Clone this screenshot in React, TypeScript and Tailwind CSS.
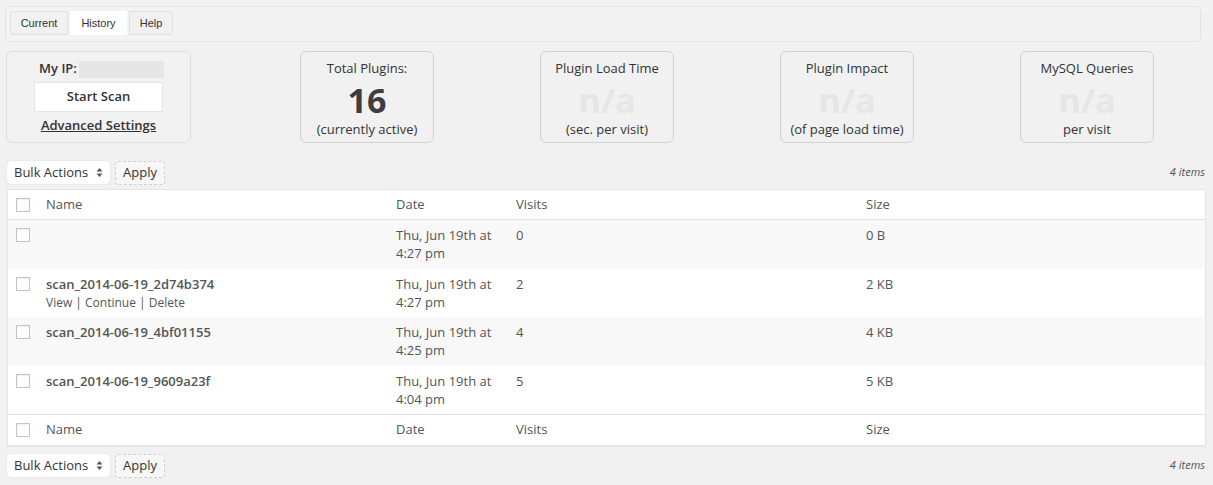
import React from 'react';

const rows = [
  { name: '', actions: false, date: 'Thu, Jun 19th at 4:27 pm', visits: '0', size: '0 B' },
  { name: 'scan_2014-06-19_2d74b374', actions: true, date: 'Thu, Jun 19th at 4:27 pm', visits: '2', size: '2 KB' },
  { name: 'scan_2014-06-19_4bf01155', actions: false, date: 'Thu, Jun 19th at 4:25 pm', visits: '4', size: '4 KB' },
  { name: 'scan_2014-06-19_9609a23f', actions: false, date: 'Thu, Jun 19th at 4:04 pm', visits: '5', size: '5 KB' },
];

const stats = [
  { title: 'Total Plugins:', value: '16', sub: '(currently active)', muted: false },
  { title: 'Plugin Load Time', value: 'n/a', sub: '(sec. per visit)', muted: true },
  { title: 'Plugin Impact', value: 'n/a', sub: '(of page load time)', muted: true },
  { title: 'MySQL Queries', value: 'n/a', sub: 'per visit', muted: true },
];

function Checkbox() {
  return <div className="w-[14px] h-[14px] border border-[#c4c4c4] bg-white shadow-[inset_0_1px_2px_rgba(0,0,0,0.07)]" />;
}

function BulkBar() {
  return (
    <div className="flex items-center h-[25px]">
      <div className="ml-[7px] w-[103px] h-[23px] bg-white rounded-[4px] shadow-[0_0_1px_rgba(0,0,0,0.25)] flex items-center pl-[7px] text-[13px] text-[#333]">
        Bulk Actions
        <svg width="7" height="11" viewBox="0 0 7 11" className="ml-[8px]">
          <path d="M0.5 4.5 L3.5 1 L6.5 4.5 Z" fill="#555" />
          <path d="M0.5 6.5 L3.5 10 L6.5 6.5 Z" fill="#555" />
        </svg>
      </div>
      <div className="ml-[5px] w-[50px] h-[24px] bg-[#f7f7f7] border border-dashed border-[#cfcfcf] rounded-[3px] flex items-center justify-center text-[13px] text-[#333]">
        Apply
      </div>
      <div className="ml-auto mr-[8px] text-[11px] italic text-[#555]">4 items</div>
    </div>
  );
}

export default function App() {
  return (
    <div className="w-[1213px] h-[485px] bg-[#f1f1f1] pt-[6px] text-[#444] overflow-hidden" style={{ fontFamily: '"Open Sans", sans-serif' }}>
      {/* tabs */}
      <div className="ml-[5px] w-[1196px] h-[36px] border border-[#e2e2e2] rounded-[5px] bg-[#f3f3f3] pt-[4px] pl-[4px]">
        <div className="flex gap-[2px] text-[11px] text-[#333]" style={{ fontFamily: '"Liberation Sans", Arial, sans-serif' }}>
          <div className="h-[24px] w-[58px] flex items-center justify-center bg-[#f1f1f1] border border-[#e0e0e0] rounded-l-[3px]">Current</div>
          <div className="h-[24px] w-[57px] flex items-center justify-center bg-white">History</div>
          <div className="h-[24px] w-[44px] flex items-center justify-center bg-[#f1f1f1] border border-[#e0e0e0] rounded-r-[3px]">Help</div>
        </div>
      </div>

      {/* summary */}
      <div className="flex mt-[9px] h-[92px]">
        <div className="ml-[6px] w-[185px] border border-[#dcdcdc] rounded-[6px] bg-[#f2f2f2] flex flex-col items-center pt-[8px]">
          <div className="flex items-center h-[18px] text-[13px] font-semibold text-[#333]">
            <span className="ml-[6px]">My IP:</span>
            <span className="ml-[2px] w-[85px] h-[17px] bg-[#e6e6e6]" />
          </div>
          <div className="mt-[4px] w-[129px] h-[30px] bg-white border border-[#e4e4e4] flex items-center justify-center text-[13px] font-semibold text-[#333]">
            Start Scan
          </div>
          <div className="mt-[4px] text-[13px] font-semibold text-[#333] underline">Advanced Settings</div>
        </div>
        <div className="flex gap-[106px] ml-[109px]">
          {stats.map((s) => (
            <div key={s.title} className="w-[134px] border border-[#d2d2d2] rounded-[6px] flex flex-col items-center pt-[7px]">
              <div className="text-[13px] text-[#333] leading-[18px]">{s.title}</div>
              <div className={`text-[34px] font-bold leading-[34px] mt-[6px] ${s.muted ? 'text-[#e6e6e6]' : 'text-[#3d3d3d]'}`}>{s.value}</div>
              <div className="text-[13px] text-[#333] leading-[18px] mt-[3px]">{s.sub}</div>
            </div>
          ))}
        </div>
      </div>

      <div className="mt-[17px]">
        <BulkBar />
      </div>

      {/* table */}
      <div className="ml-[7px] mt-[4px] w-[1199px] bg-white border border-[#e5e5e5] text-[13px] text-[#555] shadow-[0_1px_1px_rgba(0,0,0,0.04)]">
        <div className="flex items-center h-[30px] border-b border-[#e1e1e1]">
          <div className="w-[31px] pl-[8px]"><Checkbox /></div>
          <div className="w-[350px] pl-[7px]">Name</div>
          <div className="w-[120px] pl-[7px]">Date</div>
          <div className="w-[350px] pl-[7px]">Visits</div>
          <div className="pl-[7px]">Size</div>
        </div>
        {rows.map((r, i) => (
          <div key={i} className={`flex h-[48.5px] pt-[6px] leading-[18px] ${i % 2 === 0 ? 'bg-[#f8f8f8]' : 'bg-white'}`}>
            <div className="w-[31px] pl-[8px] pt-[2px]"><Checkbox /></div>
            <div className="w-[350px] pl-[7px]">
              <div className="font-semibold">{r.name}</div>
              {r.actions && (
                <div className="text-[12px] mt-[1px]">View | Continue | Delete</div>
              )}
            </div>
            <div className="w-[120px] pl-[7px] pr-[12px]">{r.date}</div>
            <div className="w-[350px] pl-[7px]">{r.visits}</div>
            <div className="pl-[7px]">{r.size}</div>
          </div>
        ))}
        <div className="flex items-center h-[31px] border-t border-[#e1e1e1]">
          <div className="w-[31px] pl-[8px]"><Checkbox /></div>
          <div className="w-[350px] pl-[7px]">Name</div>
          <div className="w-[120px] pl-[7px]">Date</div>
          <div className="w-[350px] pl-[7px]">Visits</div>
          <div className="pl-[7px]">Size</div>
        </div>
      </div>

      <div className="mt-[7px]">
        <BulkBar />
      </div>
    </div>
  );
}
